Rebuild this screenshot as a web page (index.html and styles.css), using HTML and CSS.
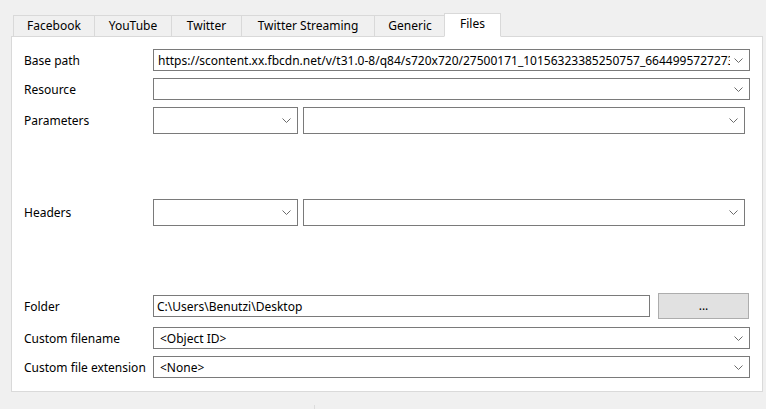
FILE: index.html
```html
<!DOCTYPE html>
<html>
<head>
<meta charset="utf-8">
<link rel="stylesheet" href="styles.css">
</head>
<body>
<div class="tabs">
  <div class="tab tab-facebook">Facebook</div>
  <div class="tab tab-youtube">YouTube</div>
  <div class="tab tab-twitter">Twitter</div>
  <div class="tab tab-streaming">Twitter Streaming</div>
  <div class="tab tab-generic">Generic</div>
  <div class="tab tab-files active">Files</div>
</div>
<div class="panel">
  <div class="row row-base">
    <div class="label">Base path</div>
    <div class="combo combo-full">
      <span class="value">https://scontent.xx.fbcdn.net/v/t31.0-8/q84/s720x720/27500171_10156323385250757_6644995727273837384_n.jpg</span>
      <svg class="chev" width="9" height="5" viewBox="0 0 9 5"><polyline points="0.5,0.5 4.5,4.5 8.5,0.5" fill="none" stroke="#6b6b6b" stroke-width="1"/></svg>
    </div>
  </div>
  <div class="row row-resource">
    <div class="label">Resource</div>
    <div class="combo combo-full">
      <span class="value"></span>
      <svg class="chev" width="9" height="5" viewBox="0 0 9 5"><polyline points="0.5,0.5 4.5,4.5 8.5,0.5" fill="none" stroke="#6b6b6b" stroke-width="1"/></svg>
    </div>
  </div>
  <div class="row row-params">
    <div class="label">Parameters</div>
    <div class="pair">
      <div class="combo combo-tall combo-key">
        <span class="value"></span>
        <svg class="chev" width="9" height="5" viewBox="0 0 9 5"><polyline points="0.5,0.5 4.5,4.5 8.5,0.5" fill="none" stroke="#6b6b6b" stroke-width="1"/></svg>
      </div>
      <div class="combo combo-tall combo-val">
        <span class="value"></span>
        <svg class="chev" width="9" height="5" viewBox="0 0 9 5"><polyline points="0.5,0.5 4.5,4.5 8.5,0.5" fill="none" stroke="#6b6b6b" stroke-width="1"/></svg>
      </div>
    </div>
  </div>
  <div class="row row-headers">
    <div class="label">Headers</div>
    <div class="pair">
      <div class="combo combo-tall combo-key">
        <span class="value"></span>
        <svg class="chev" width="9" height="5" viewBox="0 0 9 5"><polyline points="0.5,0.5 4.5,4.5 8.5,0.5" fill="none" stroke="#6b6b6b" stroke-width="1"/></svg>
      </div>
      <div class="combo combo-tall combo-val">
        <span class="value"></span>
        <svg class="chev" width="9" height="5" viewBox="0 0 9 5"><polyline points="0.5,0.5 4.5,4.5 8.5,0.5" fill="none" stroke="#6b6b6b" stroke-width="1"/></svg>
      </div>
    </div>
  </div>
  <div class="row row-folder">
    <div class="label">Folder</div>
    <div class="textbox">C:\Users\Benutzi\Desktop</div>
    <div class="button">...</div>
  </div>
  <div class="row row-filename">
    <div class="label">Custom filename</div>
    <div class="combo combo-full">
      <span class="value value-indent">&lt;Object ID&gt;</span>
      <svg class="chev" width="9" height="5" viewBox="0 0 9 5"><polyline points="0.5,0.5 4.5,4.5 8.5,0.5" fill="none" stroke="#6b6b6b" stroke-width="1"/></svg>
    </div>
  </div>
  <div class="row row-ext">
    <div class="label">Custom file extension</div>
    <div class="combo combo-full">
      <span class="value value-indent">&lt;None&gt;</span>
      <svg class="chev" width="9" height="5" viewBox="0 0 9 5"><polyline points="0.5,0.5 4.5,4.5 8.5,0.5" fill="none" stroke="#6b6b6b" stroke-width="1"/></svg>
    </div>
  </div>
</div>
<div class="statusbar"><div class="divider"></div></div>
</body>
</html>
```
FILE: styles.css
```css
* { box-sizing: border-box; }
html, body { margin: 0; padding: 0; }
body {
  width: 766px;
  height: 409px;
  overflow: hidden;
  background: #f0f0f0;
  font-family: "Noto Sans", "Open Sans", sans-serif;
  font-size: 12px;
  color: #000;
}
.tabs {
  display: flex;
  align-items: flex-end;
  height: 37px;
  padding-left: 13px;
  position: relative;
  z-index: 1;
}
.tab {
  height: 22px;
  border: 1px solid #d9d9d9;
  border-bottom: 1px solid #d9d9d9;
  border-right: none;
  background: #f0f0f0;
  display: flex;
  align-items: center;
  justify-content: center;
  white-space: nowrap;
  padding-bottom: 1px;
}
.tab-facebook { width: 81px; }
.tab-youtube { width: 77px; }
.tab-twitter { width: 70px; }
.tab-streaming { width: 133px; }
.tab-generic { width: 72px; border-right: 1px solid #d9d9d9; }
.tab-files { width: 57px; }
.tab.active {
  height: 24px;
  margin-left: -2px;
  background: #fff;
  border-right: 1px solid #d9d9d9;
  border-bottom-color: #fff;
  padding-bottom: 3px;
}
.panel {
  margin-left: 11px;
  width: 752px;
  height: 356px;
  margin-top: -1px;
  background: #fff;
  border: 1px solid #d9d9d9;
  border-right-color: #dadada;
  border-bottom-color: #dadada;
  padding: 12px 12px 0 12px;
  display: flex;
  flex-direction: column;
}
.row {
  display: flex;
  align-items: center;
}
.label {
  width: 129px;
  flex: none;
  white-space: nowrap;
}
.row-resource { margin-top: 7px; }
.row-params { margin-top: 7px; }
.row-headers { margin-top: 65px; }
.row-folder { margin-top: 67px; }
.row-filename { margin-top: 8px; }
.row-ext { margin-top: 7px; }
.combo {
  display: flex;
  align-items: center;
  height: 22px;
  border: 1px solid #7a7a7a;
  background: #fff;
  padding-left: 4px;
  padding-right: 5px;
  overflow: hidden;
}
.combo-full { width: 597px; }
.combo-tall { height: 27px; }
.pair {
  display: flex;
  gap: 5px;
}
.combo-key { width: 145px; }
.combo-val { width: 442px; }
.value {
  flex: 1;
  min-width: 0;
  white-space: nowrap;
  overflow: hidden;
}
.value-indent { padding-left: 2px; }
.chev {
  flex: none;
  margin-left: 4px;
  margin-right: 1px;
}
.textbox {
  width: 497px;
  height: 22px;
  border: 1px solid #7a7a7a;
  padding-left: 3px;
  display: flex;
  align-items: center;
  white-space: nowrap;
}
.button {
  width: 91px;
  height: 26px;
  margin-left: 8px;
  background: #e1e1e1;
  border: 1px solid #adadad;
  display: flex;
  align-items: center;
  justify-content: center;
  padding-bottom: 2px;
}
.statusbar {
  height: 17px;
  padding-top: 13px;
}
.divider {
  margin-left: 314px;
  width: 1px;
  height: 4px;
  background: #dcdcdc;
}
```
